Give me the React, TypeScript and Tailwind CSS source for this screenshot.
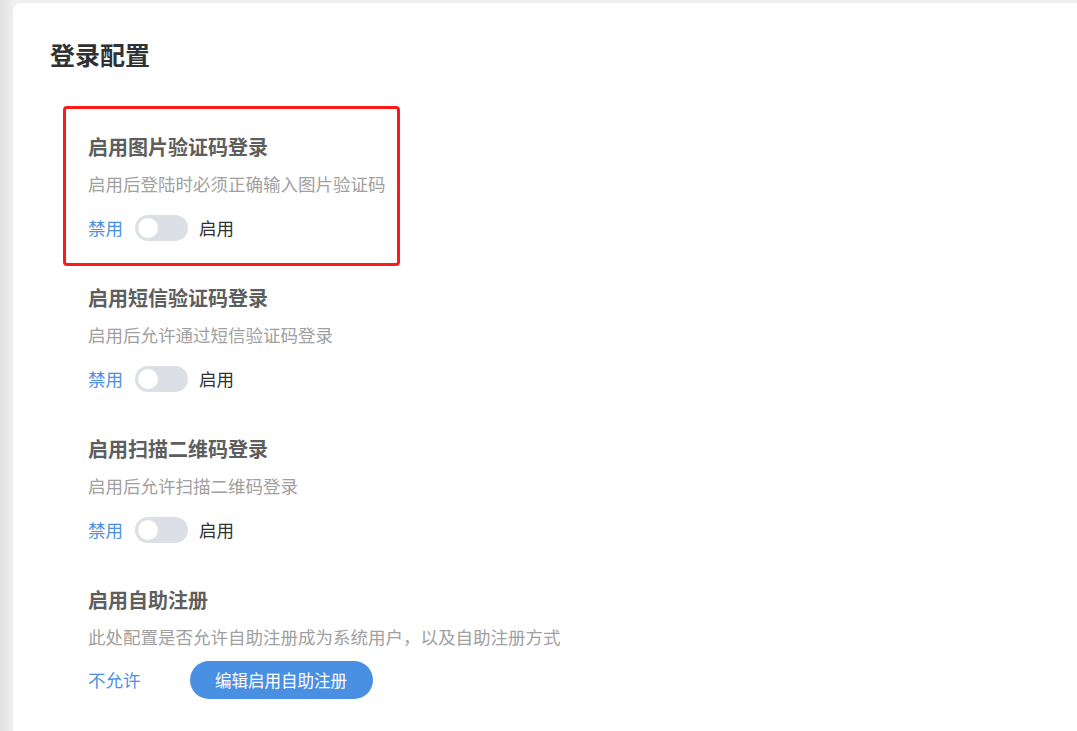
import React from "react";

type Item = {
  title: string;
  desc: string;
  toggle: boolean;
};

const items: Item[] = [
  { title: "启用图片验证码登录", desc: "启用后登陆时必须正确输入图片验证码", toggle: true },
  { title: "启用短信验证码登录", desc: "启用后允许通过短信验证码登录", toggle: true },
  { title: "启用扫描二维码登录", desc: "启用后允许扫描二维码登录", toggle: true },
];

const Toggle = () => (
  <div className="ml-[12px] flex h-[26px] w-[53px] items-center rounded-full bg-[#dcdfe6] px-[3px]">
    <div className="h-[20px] w-[20px] rounded-full bg-white" />
  </div>
);

const App = () => {
  return (
    <div
      className="flex min-h-screen bg-[#efefef] bg-[linear-gradient(to_right,#e0e0e0,#efefef_13px)] pl-[13px] pt-[3px]"
      style={{ fontFamily: '"Noto Sans CJK SC", "Noto Sans", sans-serif' }}
    >
      <div className="flex-1 rounded-tl-[8px] bg-white pl-[37px] pt-[35px]">
        <h1 className="text-[25px] font-bold leading-[32px] text-[#303133]">登录配置</h1>

        <div className="relative ml-[38px] mt-[63px] flex flex-col gap-[43px]">
          {/* highlight */}
          <div className="pointer-events-none absolute left-[-25px] top-[-27px] h-[160px] w-[337px] rounded-[4px] border-[3px] border-[#ff1a1a]" />

          {items.map((it) => (
            <div key={it.title} className="flex flex-col">
              <div className="text-[20px] font-bold leading-[28px] text-[#5e5e5e]">{it.title}</div>
              <div className="mt-[10px] text-[17.5px] leading-[26px] text-[#a0a0a0]">{it.desc}</div>
              <div className="mt-[18px] flex h-[26px] items-center text-[17.5px]">
                <span className="text-[#4a90e2]">禁用</span>
                <Toggle />
                <span className="ml-[11px] text-[#303133]">启用</span>
              </div>
            </div>
          ))}

          <div className="flex flex-col">
            <div className="text-[20px] font-bold leading-[28px] text-[#5e5e5e]">启用自助注册</div>
            <div className="mt-[10px] text-[17.5px] leading-[26px] text-[#a0a0a0]">
              此处配置是否允许自助注册成为系统用户，以及自助注册方式
            </div>
            <div className="mt-[11px] flex items-center">
              <span className="text-[17.5px] text-[#4a90e2]">不允许</span>
              <button className="ml-[49px] flex h-[38px] w-[183px] items-center justify-center rounded-full bg-[#4a90e2] text-[16.5px] text-white">
                编辑启用自助注册
              </button>
            </div>
          </div>
        </div>
      </div>
    </div>
  );
};

export default App;
